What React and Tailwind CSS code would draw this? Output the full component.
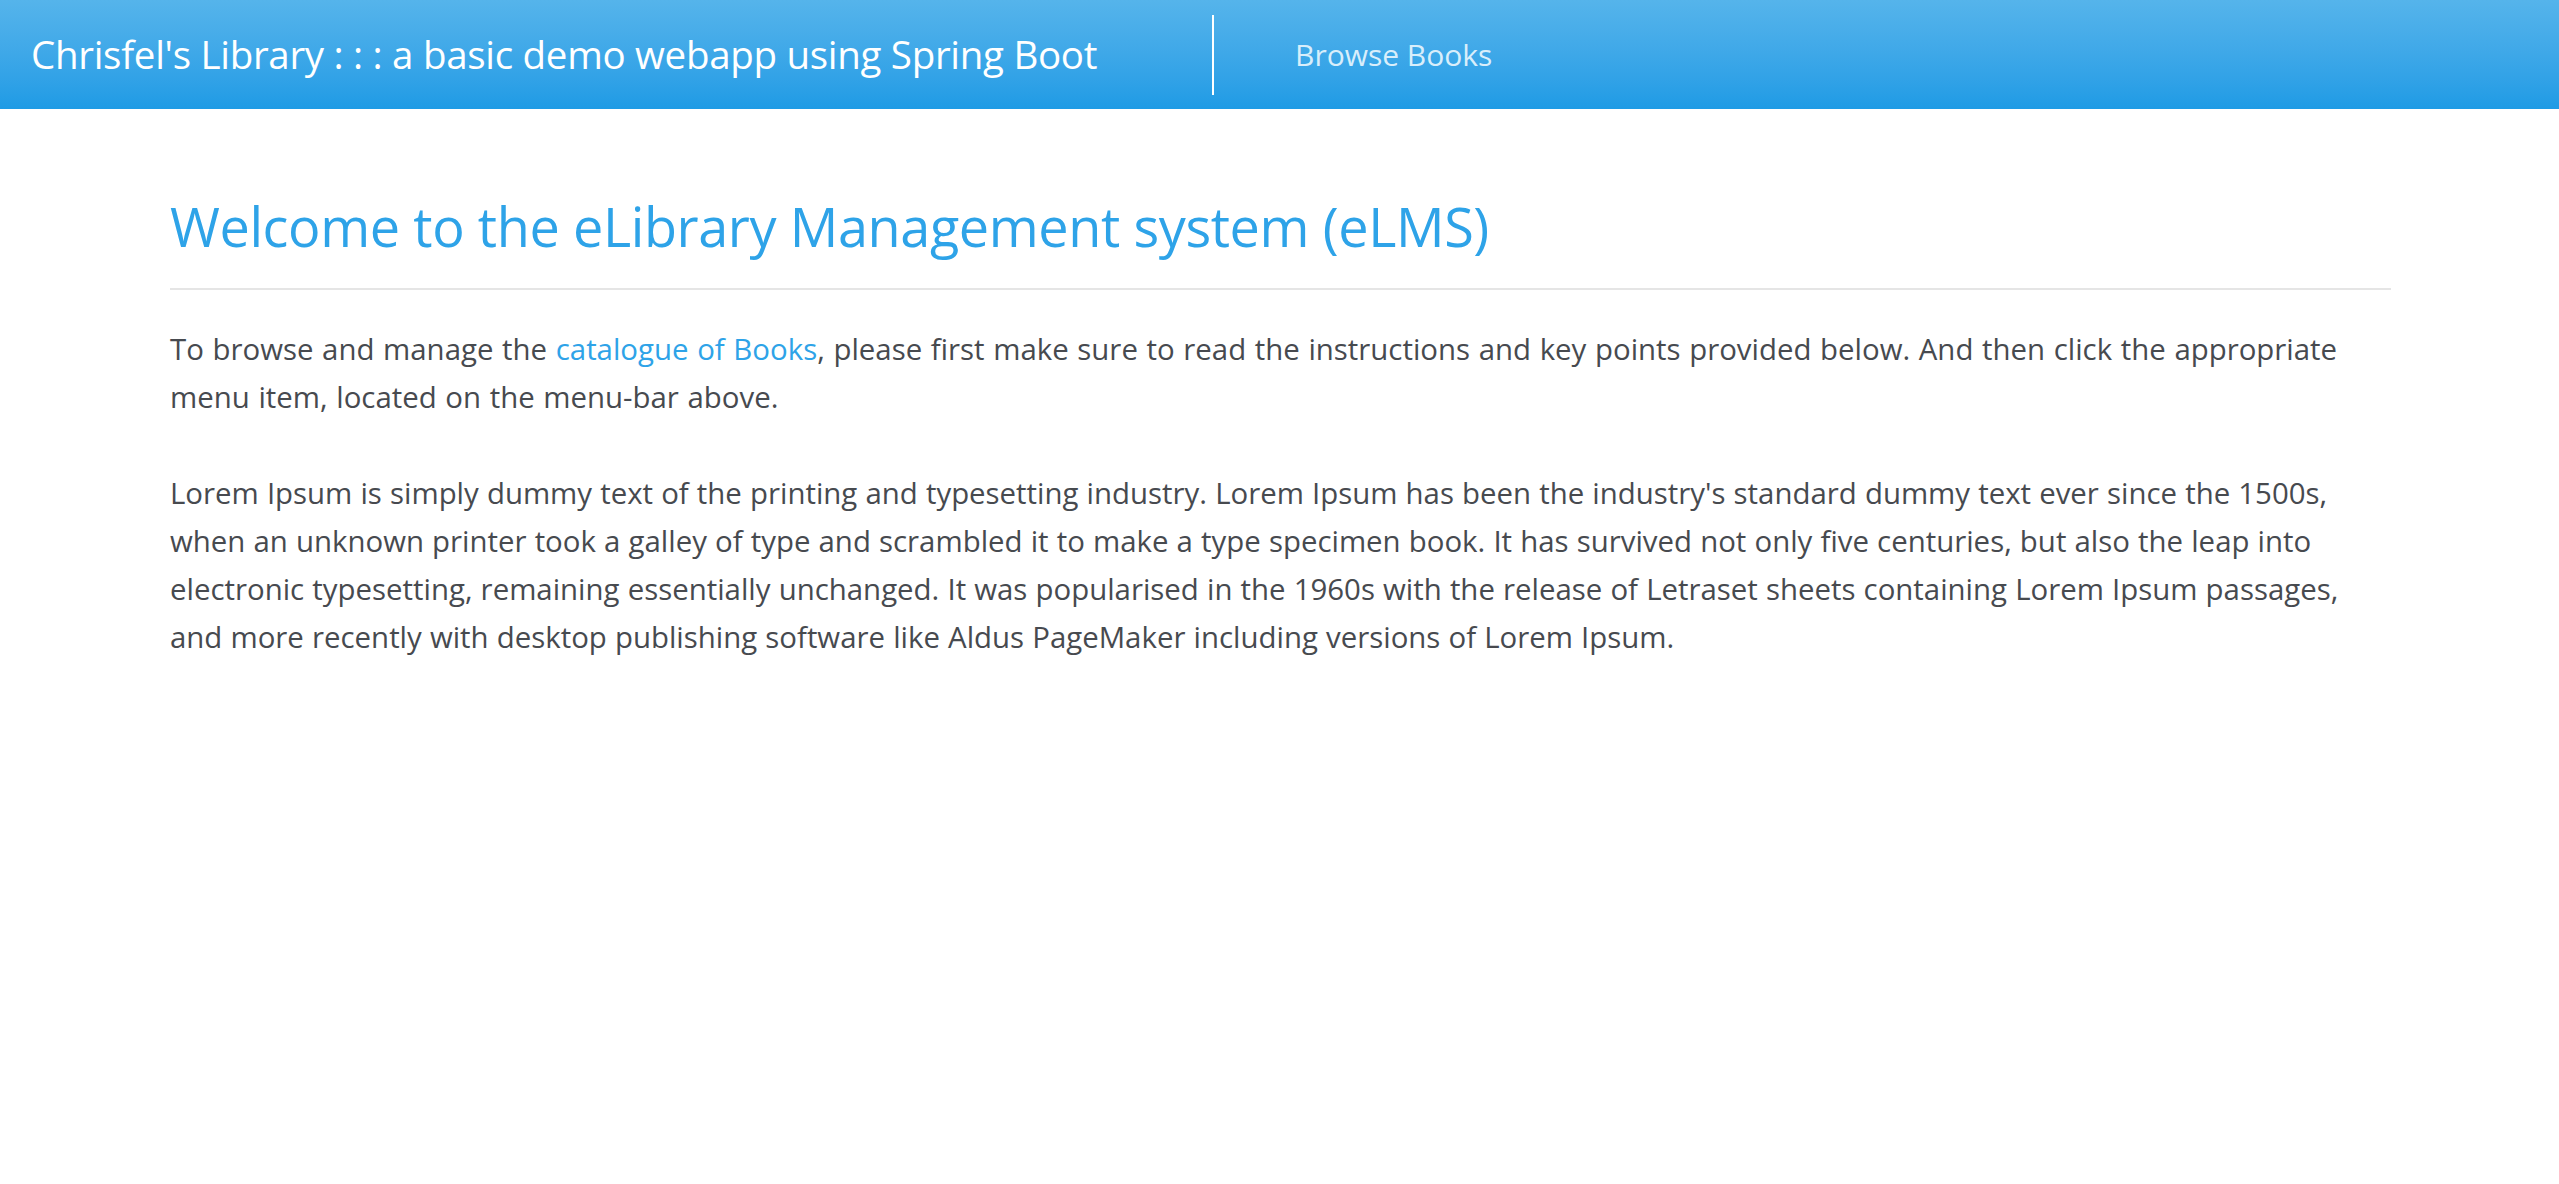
// eLMS landing page

import React from 'react';

const font = { fontFamily: '"Open Sans", "Noto Sans", sans-serif' };

function Navbar() {
  return (
    <header className="h-[109px] w-full bg-gradient-to-b from-[#55b4eb] to-[#1e9be5] flex items-center">
      <a href="#" className="ml-[31px] w-[1069px] text-[38.5px] leading-none text-white tracking-[-0.3px] whitespace-nowrap">
        Chrisfel's Library : : : a basic demo webapp using Spring Boot
      </a>
      <div className="ml-[112px] h-[80px] w-[2px] bg-white" />
      <a href="#" className="ml-[81px] text-[30px] leading-none text-[#d8eefb] whitespace-nowrap">
        Browse Books
      </a>
    </header>
  );
}

export default function App() {
  return (
    <div className="min-h-screen bg-white" style={font}>
      <Navbar />
      <main className="ml-[170px] w-[2221px]">
        <h1 className="mt-[84px] text-[54px] leading-[66px] text-[#2ea3e8] tracking-[-0.4px]">
          Welcome to the eLibrary Management system (eLMS)
        </h1>
        <hr className="mt-[29px] border-t-2 border-[#e5e5e5]" />

        <p className="mt-[35px] text-[29.4px] leading-[48px] text-[#474a4f] [word-spacing:1px]">
          To browse and manage the{' '}
          <a href="#" className="text-[#2ea3e8]">catalogue of Books</a>, please first make sure to read the
          instructions and key points provided below. And then click the appropriate menu item, located on the
          menu-bar above.
        </p>

        <p className="mt-[48px] text-[29.4px] leading-[48px] text-[#474a4f] [word-spacing:0.5px]">
          Lorem Ipsum is simply dummy text of the printing and typesetting industry. Lorem Ipsum has been the
          industry's standard dummy text ever since the 1500s, when an unknown printer took a galley of type and
          scrambled it to make a type specimen book. It has survived not only five centuries, but also the leap
          into electronic typesetting, remaining essentially unchanged. It was popularised in the 1960s with the
          release of Letraset sheets containing Lorem Ipsum passages, and more recently with desktop publishing
          software like Aldus PageMaker including versions of Lorem Ipsum.
        </p>
      </main>
    </div>
  );
}
